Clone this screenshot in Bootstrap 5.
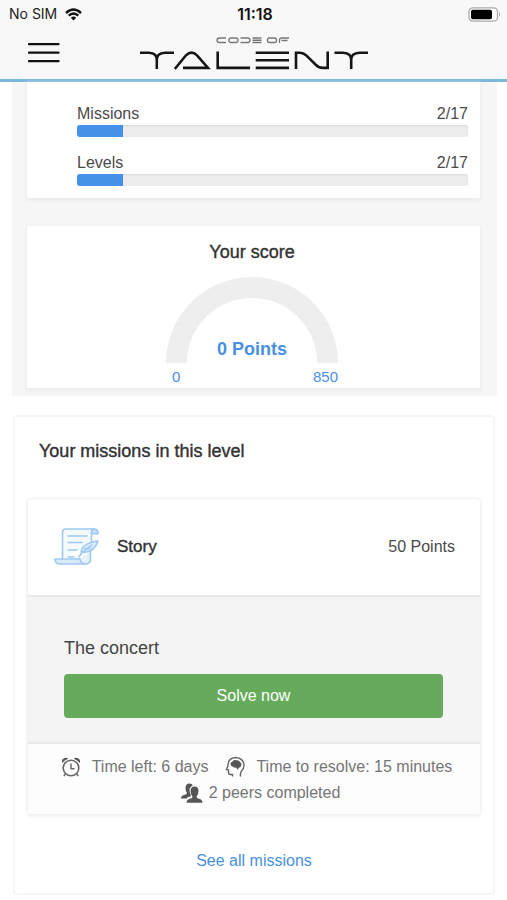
<!DOCTYPE html>
<html lang="en">
<head>
<meta charset="utf-8">
<meta name="viewport" content="width=device-width, initial-scale=1">
<title>Code of Talent</title>
<link rel="stylesheet" href="https://cdn.jsdelivr.net/npm/bootstrap@5.3.0/dist/css/bootstrap.min.css">
<style>
  body { font-family: "Liberation Sans", Arial, sans-serif; font-size: 16px; line-height: 20px; color: #4a4a4a; background: #fff; }
  .app-header { background: #f8f8f8; border-bottom: 3px solid #7ab6dd; }
  .status-bar { height: 28px; padding: 0 6px 0 9px; font-family: Inter, sans-serif; font-size: 14px; color: #222; }
  .status-bar .clock { font-size: 16px; font-weight: 600; color: #111; }
  .brand-bar { height: 51px; padding: 0 28px 2px; }
  .menu-toggle { width: 32px; }
  .side { flex: 1 1 0; }
  .stats { margin: 0 10px 0 12px; padding: 0 17px 8px 15px; background: #f6f6f6; }
  .tile { background: #fff; box-shadow: 0 2px 4px 1px #ececec; }
  .totals { padding: 22px 12px 12px 50px; margin-bottom: 28px; }
  .totals .progress { height: 12px; border-radius: 3px; background: #ededed; box-shadow: inset 0 1px 2px #dadada; }
  .totals .progress-bar { background: #4591ea; }
  .totals .entry + .entry { margin-top: 16px; }
  .entry .labels { padding-bottom: 1px; }
  .medium { -webkit-text-stroke: .4px currentColor; color: #333; }
  .heading { font-size: 18px; line-height: 24px; }
  .score { padding: 14px 3px 1px 0; }
  .gauge { width: 172px; margin-top: 13px; }
  .gauge svg { display: block; }
  .gauge-value { position: absolute; left: 0; right: 0; bottom: 2px; font-size: 18px; line-height: 24px; font-weight: 700; text-align: center; }
  .gauge, .more { color: #4990e2; }
  .scale { font-size: 15px; padding: 4px 0 0 6px; }
  .missions { margin: 19px 12px 0 13px; padding: 22px 12px 22px; border: 2px solid #f6f6f6; border-radius: 4px; }
  .missions > .heading { padding-left: 12px; margin-bottom: 35px; }
  .mission { border: 1px solid #f2f2f2; border-radius: 4px; box-shadow: 0 1px 2px 1px #f4f4f4; overflow: hidden; }
  .mission-top { height: 96px; padding: 0 25px 0 26px; }
  .mission-name { font-size: 17px; margin-left: 17px; }
  .mission-body { background: #f4f4f4; border: solid #e8e8e8; border-width: 2px 0; padding: 39px 37px 24px 36px; }
  .title { font-size: 18px; line-height: 24px; color: #444; margin-bottom: 14px; }
  .solve { background: #66ab5b; color: #fff; height: 44px; border-radius: 4px; border: 0; font-size: 16px; }
  .solve:hover { background: #59994f; color: #fff; }
  .mission-foot { background: #fdfdfd; color: #757575; padding: 10px 14px 8px 18px; column-gap: 16px; }
  .mission-foot .fact { line-height: 26px; column-gap: 10px; }
  .mission-foot .peers { column-gap: 5px; padding-left: 8px; }
  .more { margin-top: 36px; text-decoration: none; }
</style>
<script src="https://cdn.jsdelivr.net/npm/bootstrap@5.3.0/dist/js/bootstrap.bundle.min.js"></script>
</head>
<body>
<header class="app-header">
  <div class="status-bar d-flex align-items-center">
    <div class="side d-flex align-items-center gap-2">
      <span>No SIM</span>
      <svg width="17" height="13" viewBox="0 0 17 13" fill="none" stroke="#111" stroke-width="2.400" aria-hidden="true"><path d="M1 5Q8.500-1.800 16 5M3.700 7.700Q8.500 3.400 13.300 7.700"/><path d="M5.800 9.700Q8.500 7.300 11.200 9.700L8.500 12.400Z" fill="#111" stroke="none"/></svg>
    </div>
    <span class="clock">11:18</span>
    <div class="side d-flex justify-content-end">
      <svg width="33" height="15" viewBox="0 0 33 15" aria-hidden="true"><rect x="1" y=".8" width="28.500" height="13.400" rx="4" fill="#fff" stroke="#aaa" stroke-width="1.300"/><rect x="3" y="2.800" width="21" height="9.400" rx="1.800" fill="#000"/><path d="M31 5Q33 7.500 31 10Z" fill="#aaa"/></svg>
    </div>
  </div>
  <div class="brand-bar d-flex align-items-center">
    <div class="side">
      <button type="button" class="menu-toggle btn p-0 border-0 d-block" aria-label="Menu">
        <svg class="d-block" width="32" height="22" viewBox="0 0 32 22" stroke="#111" stroke-width="2.300" stroke-linecap="round"><path d="M1 2.200H30.500M1 10.700H30.500M1 19.200H30.500"/></svg>
      </button>
    </div>
    <svg width="230" height="36" viewBox="139 34 230 36" fill="none" role="img" aria-label="Code of Talent">
      <g stroke="#151515" stroke-width="2.600">
        <path d="M140 51.700H149Q156.800 52 156.800 58.500V68M174 51.700H165Q156.800 52 156.800 58.500"/>
        <path d="M174.800 68L186 54.300Q191.500 48.800 197 54.300L208 66.900H183"/>
        <path d="M217.700 50.500V66.900H250"/>
        <path d="M255.700 51.700H289M255.700 59.300H289M255.700 66.900H289"/>
        <path d="M296 68V51.700H300Q303.500 51.700 306.500 54.700L316 64Q319 66.900 323 66.900H327.700V50.500"/>
        <path d="M334.500 51.700H343Q351.200 52 351.200 58.500V68M368 51.700H359.500Q351.200 52 351.200 58.500"/>
      </g>
      <g stroke="#777" stroke-width="1.300">
        <path d="M226 37H219.500Q217 37 217 39.200T219.500 41.500H226"/>
        <rect x="229" y="37" width="9" height="4.500" rx="2"/>
        <path d="M240.500 37H247.500Q250 37 250 39.200T247.500 41.500H240.500"/>
        <path d="M252.500 37H261.500M252.500 39.250H261.500M252.500 41.500H261.500"/>
        <rect x="267.500" y="37" width="9" height="4.500" rx="2"/>
        <path d="M289 37H282Q279.500 37 279.500 39V42M281.500 39.500H287.500"/>
      </g>
    </svg>
    <div class="side"></div>
  </div>
</header>

<main>
  <section class="stats">
    <div class="tile totals">
      <div class="entry">
        <div class="labels d-flex justify-content-between"><span>Missions</span><span>2/17</span></div>
        <div class="progress" role="progressbar" aria-label="Missions" aria-valuenow="2" aria-valuemin="0" aria-valuemax="17"><div class="progress-bar" style="width:11.8%"></div></div>
      </div>
      <div class="entry">
        <div class="labels d-flex justify-content-between"><span>Levels</span><span>2/17</span></div>
        <div class="progress" role="progressbar" aria-label="Levels" aria-valuenow="2" aria-valuemin="0" aria-valuemax="17"><div class="progress-bar" style="width:11.8%"></div></div>
      </div>
    </div>
    <div class="tile score">
      <h2 class="heading medium text-center fw-normal m-0">Your score</h2>
      <div class="gauge mx-auto">
        <div class="position-relative">
          <svg width="172" height="86" viewBox="0 0 172 86" fill="none" aria-hidden="true"><path d="M10.500 86A75.500 75.500 0 0 1 161.500 86" stroke="#eee" stroke-width="21"/></svg>
          <div class="gauge-value">0 Points</div>
        </div>
        <div class="scale d-flex justify-content-between"><span>0</span><span>850</span></div>
      </div>
    </div>
  </section>

  <section class="missions">
    <h2 class="heading medium fw-normal mt-0">Your missions in this level</h2>
    <article class="mission">
      <div class="mission-top d-flex align-items-center">
        <svg width="46" height="38" viewBox="0 0 46 38" fill="none" stroke="#9fc9f3" stroke-width="1.600" stroke-linejoin="round" stroke-linecap="round" aria-hidden="true">
          <path d="M8.500 30.500V4Q8.500 1 11.500 1H40Q44 1 44 5.500H37.500V15M37.500 5.500Q37.500 1.500 40 1.200" fill="#f4f9fe"/>
          <path d="M38 1.500H41Q44 2 44 5.500H37.500Z" fill="#cfe4f9"/>
          <path d="M31 36Q36.500 36 36.500 31V23L26 31Q27 36 31 36" fill="#e4f0fc" stroke="none"/>
          <path d="M31 36Q36.500 36 36.500 31V23"/>
          <path d="M1 31H26Q27 36 31 36H5Q1.500 36 1 31Z" fill="#d8eafb"/>
          <path d="M14 8H33M14 14.500H28M14 22H23M14 29H20"/>
          <path d="M27 24Q28 15.500 44 13Q41 23 30.500 24.500Z" fill="#e0effd"/>
          <path d="M25 29L28 24.500L38 17M31 20.500H36"/>
        </svg>
        <span class="mission-name medium">Story</span>
        <span class="ms-auto">50 Points</span>
      </div>
      <div class="mission-body">
        <h3 class="title fw-normal mt-0">The concert</h3>
        <button type="button" class="btn solve w-100">Solve now</button>
      </div>
      <div class="mission-foot d-flex flex-wrap justify-content-center">
        <span class="fact d-flex align-items-center">
          <svg width="22" height="22" viewBox="0 0 22 22" fill="none" stroke="#666" stroke-width="1.600" aria-hidden="true"><circle cx="11" cy="12" r="7.800"/><path d="M11 7.500V12.700H14.500M5.300 18L3.800 20.200M16.700 18L18.200 20.200" stroke-width="1.400"/><path d="M2.200 7Q1.200 3.500 4.200 2.200Q6.500 1.200 8.200 2.700Q4.500 4 2.200 7ZM19.800 7Q20.800 3.500 17.800 2.200Q15.500 1.200 13.800 2.700Q17.500 4 19.800 7Z" fill="#555" stroke="none"/></svg>
          Time left: 6 days
        </span>
        <span class="fact d-flex align-items-center">
          <svg width="22" height="22" viewBox="0 0 22 22" fill="none" stroke="#666" stroke-width="1.400" aria-hidden="true"><path d="M8.500 20.500V18.500H6.300Q4.500 18.500 4.500 16V14L2.500 13.500L4 9.500Q4 2 11.500 1.500Q19.500 2 20 9Q20 12.500 17.500 15Q16 17 16.500 20.500"/><path d="M7 9.500Q5.500 6.500 8.500 5.500Q10 3.500 12 4.300Q15 3.700 16 6Q18.200 7.500 17 10Q16.500 12 14.500 11.700L14 14L12 11.500Q9.500 12 9.200 10.500Q7.800 10.700 7 9.500Z" fill="#555" stroke="none"/></svg>
          Time to resolve: 15 minutes
        </span>
        <span class="fact peers d-flex align-items-center">
          <svg width="24" height="20" viewBox="0 0 24 20" fill="#555" aria-hidden="true"><path d="M1 15.500Q1 12.500 4 12Q7 11.500 7 10Q5.500 8.500 5.500 5Q5.500 .5 9.500 .5Q12 .5 12.800 2.500Q9 4 9.500 8Q10 11 11 12L10.800 13.300Q7.500 13.700 6.500 15.500Z"/><path d="M6.500 19.700Q6.500 16.500 10 15.700Q12.800 15.200 12.500 13.500Q10.500 11.500 10.500 8Q10.500 3.500 14.500 3.500T18.500 8Q18.500 11.500 16.500 13.500Q16.200 15.200 19 15.700Q22.500 16.500 22.500 19.700Z"/></svg>
          2 peers completed
        </span>
      </div>
    </article>
    <div class="text-center"><a class="more d-inline-block" href="#">See all missions</a></div>
  </section>
</main>
</body>
</html>
